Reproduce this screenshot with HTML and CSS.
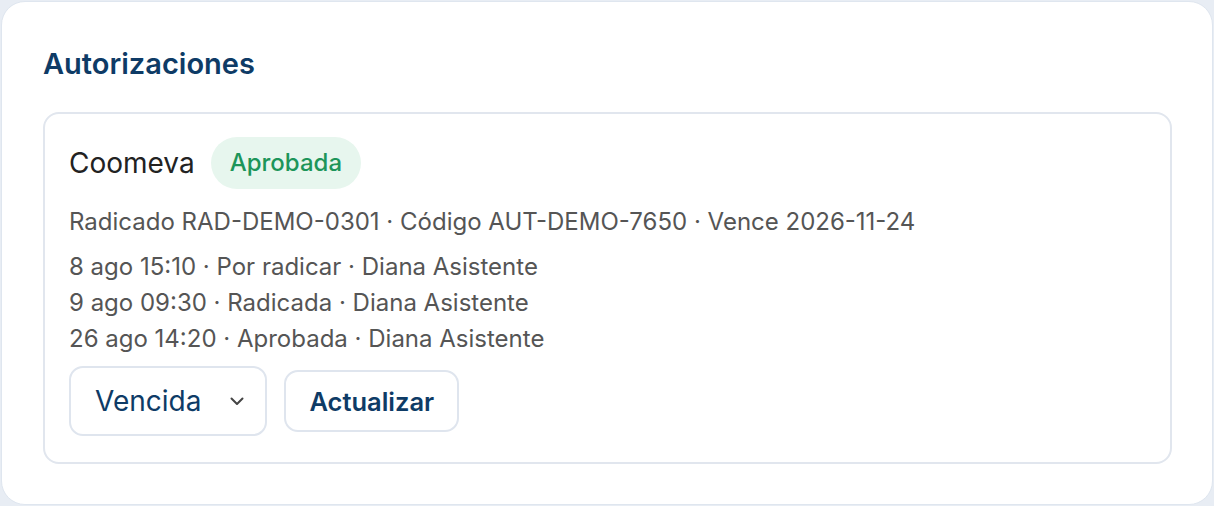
FILE: index.html
```html
<!DOCTYPE html>
<html>
<head>
    <title>Autorizaciones</title>
    <link rel="stylesheet" href="styles.css">
</head>
<body>
    <section class="panel">
        <h2 class="panel-title">Autorizaciones</h2>

        <div class="auth-card">
            <div class="auth-head">
                <span class="insurer">Coomeva</span>
                <span class="badge badge-ok">Aprobada</span>
            </div>
            <p class="auth-meta">Radicado RAD-DEMO-0301 · Código AUT-DEMO-7650 · Vence 2026-11-24</p>
            <ul class="history">
                <li>8 ago 15:10 · Por radicar · Diana Asistente</li>
                <li>9 ago 09:30 · Radicada · Diana Asistente</li>
                <li>26 ago 14:20 · Aprobada · Diana Asistente</li>
            </ul>
            <div class="actions">
                <div class="select">
                    <span>Vencida</span>
                    <svg width="16" height="16" viewBox="0 0 16 16" fill="none" stroke="#444" stroke-width="2" stroke-linecap="round" stroke-linejoin="round">
                        <path d="M2.5 5.5l5.5 5.5 5.5-5.5"/>
                    </svg>
                </div>
                <button class="btn">Actualizar</button>
            </div>
        </div>
    </section>
</body>
</html>
```

FILE: styles.css
```css
body {
    margin: 0;
    font-family: Inter, "Noto Sans", sans-serif;
    background: #e8edf4;
}
.panel {
    background: white;
    border: 1px solid #dfe6ef;
    border-radius: 24px;
    margin: 1px 1px 0 1px;
    height: 504px;
    box-sizing: border-box;
    padding: 40px 40px 40px 41px;
    display: flex;
    flex-direction: column;
}
.panel-title {
    margin: 5px 0 0 0;
    font-size: 29px;
    font-weight: 600;
    color: #0e3b66;
    line-height: 34px;
}
.auth-card {
    margin-top: 31px;
    border: 2px solid #e1e6ee;
    border-radius: 16px;
    padding: 23px 24px 24px 24px;
    flex: 1;
}
.auth-head {
    display: flex;
    align-items: center;
    gap: 16px;
}
.insurer {
    font-size: 28px;
    color: #222;
}
.badge {
    padding: 0 19px;
    height: 52px;
    line-height: 52px;
    border-radius: 26px;
    font-size: 24px;
    font-weight: 500;
}
.badge-ok {
    background: #e7f6ee;
    color: #1d955a;
}
.auth-meta {
    margin: 18px 0 0 0;
    font-size: 24px;
    color: #555;
    line-height: 30px;
}
.history {
    list-style: none;
    margin: 12px 0 0 0;
    padding: 0;
    font-size: 24px;
    color: #555;
    line-height: 36px;
}
.actions {
    display: flex;
    align-items: center;
    gap: 17px;
    margin-top: 9px;
}
.select {
    display: flex;
    align-items: center;
    gap: 28px;
    height: 70px;
    box-sizing: border-box;
    padding: 0 20px 0 24px;
    border: 2px solid #dfe5ee;
    border-radius: 14px;
    font-size: 28px;
    color: #0e3b66;
}
.btn {
    height: 62px;
    padding: 0 23px;
    border: 2px solid #dfe5ee;
    border-radius: 14px;
    background: white;
    font-family: inherit;
    font-size: 25.5px;
    font-weight: 600;
    color: #0e3b66;
}
```
